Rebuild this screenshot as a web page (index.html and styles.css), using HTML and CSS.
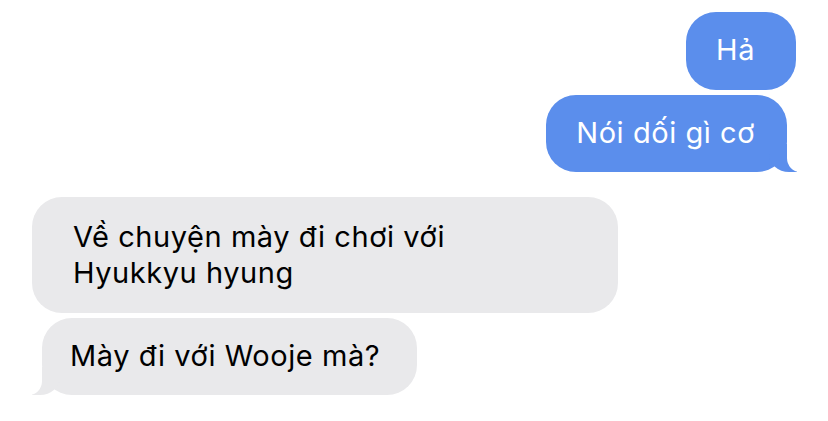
FILE: index.html
```html
<!DOCTYPE html>
<html lang="vi">
<head>
  <meta charset="UTF-8">
  <meta name="viewport" content="width=device-width, initial-scale=1.0">
  <title>Tin nhắn</title>
  <link rel="stylesheet" href="styles.css">
</head>
<body>
  <div class="thread">
    <div class="row row-sent">
      <div class="bubble sent short">Hả</div>
    </div>
    <div class="row row-sent">
      <div class="bubble sent tail">Nói dối gì cơ</div>
    </div>

    <div class="row row-received first">
      <div class="bubble received wide">Về chuyện mày đi chơi với<br>Hyukkyu hyung</div>
    </div>
    <div class="row row-received">
      <div class="bubble received tail">Mày đi với Wooje mà?</div>
    </div>
  </div>
</body>
</html>
```

FILE: styles.css
```css
body {
  margin: 0;
  padding: 0;
  background: #fff;
  font-family: Inter, 'Noto Sans', sans-serif;
  -webkit-font-smoothing: antialiased;
}

.thread {
  display: flex;
  flex-direction: column;
  gap: 5px;
  padding-top: 12px;
}

.row {
  display: flex;
}

.row-sent {
  justify-content: flex-end;
}

.row-received {
  justify-content: flex-start;
}

.row.first {
  margin-top: 20px;
}

.bubble {
  position: relative;
  font-size: 29px;
  line-height: 36px;
  letter-spacing: 0.55px;
  padding: 20px 32px 21px 30px;
  border-radius: 30px;
  box-sizing: border-box;
}

.sent {
  background: #5b8eec;
  color: #fff;
  margin-right: 41px;
}

.sent.short {
  margin-right: 32px;
  padding-right: 41px;
  padding-bottom: 22px;
}

.received {
  background: #e9e9eb;
  color: #000;
  margin-left: 42px;
  padding-left: 28px;
  padding-right: 37px;
}

.received.wide {
  width: 586px;
  margin-left: 32px;
  padding: 22px 20px 22px 41px;
}

/* duoi bong chat */
.sent.tail::before {
  content: "";
  position: absolute;
  bottom: 0;
  right: -10px;
  width: 28px;
  height: 28px;
  background: #5b8eec;
  border-bottom-left-radius: 20px 18px;
}

.sent.tail::after {
  content: "";
  position: absolute;
  bottom: 0;
  right: -30px;
  width: 30px;
  height: 28px;
  background: #fff;
  border-bottom-left-radius: 13px 14px;
}

.received.tail::before {
  content: "";
  position: absolute;
  bottom: 0;
  left: -10px;
  width: 28px;
  height: 28px;
  background: #e9e9eb;
  border-bottom-right-radius: 20px 18px;
}

.received.tail::after {
  content: "";
  position: absolute;
  bottom: 0;
  left: -30px;
  width: 30px;
  height: 28px;
  background: #fff;
  border-bottom-right-radius: 13px 14px;
}
```
